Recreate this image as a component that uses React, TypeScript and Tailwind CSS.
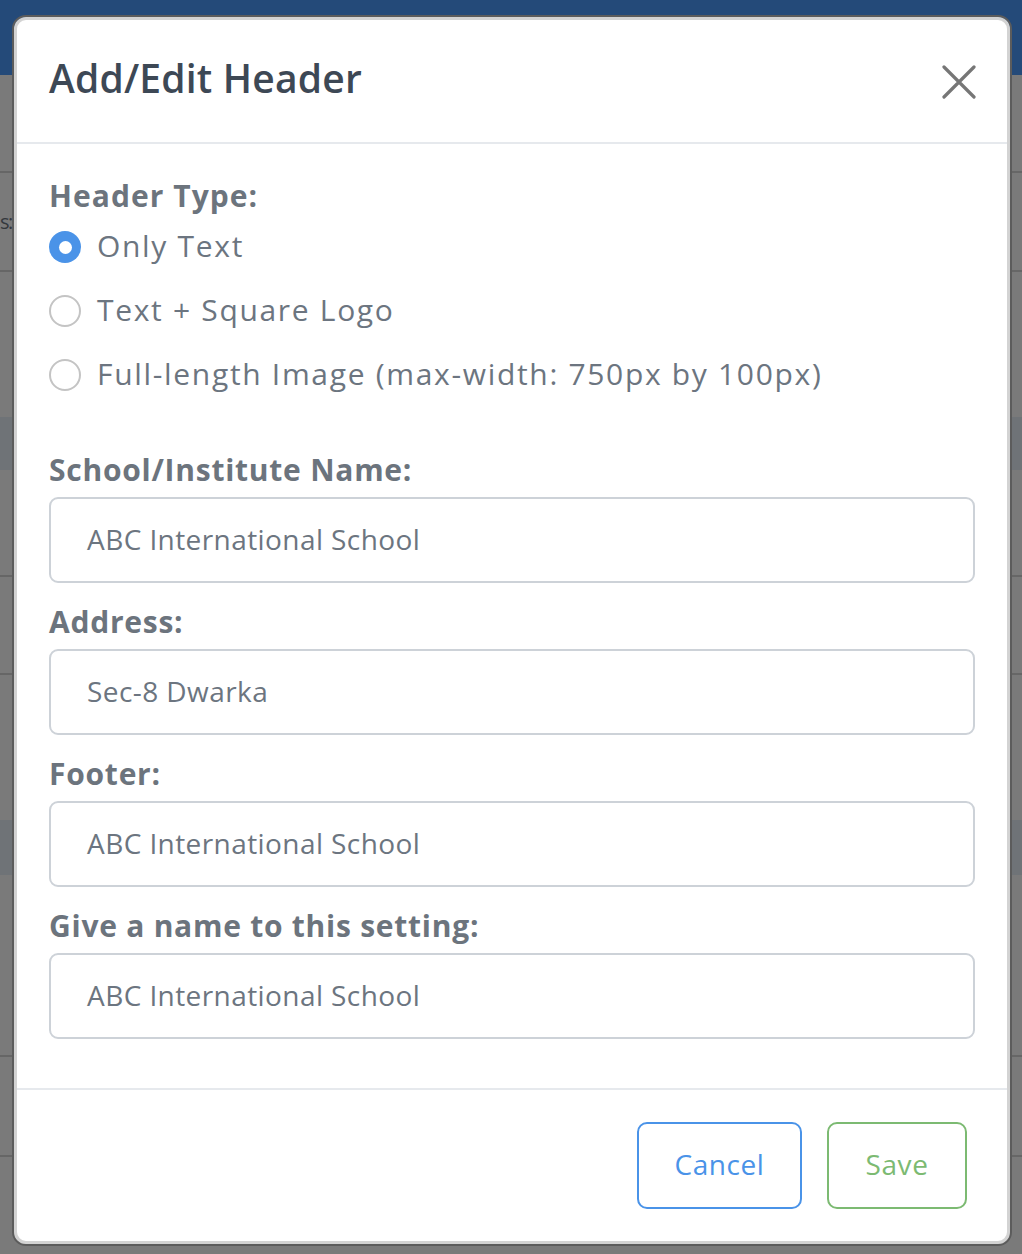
export default function App() {
  const fields = [
    { label: "School/Institute Name:", value: "ABC International School", first: true },
    { label: "Address:", value: "Sec-8 Dwarka", first: false },
    { label: "Footer:", value: "ABC International School", first: false },
    { label: "Give a name to this setting:", value: "ABC International School", first: false },
  ];
  const radios = [
    { label: "Only Text", checked: true },
    { label: "Text + Square Logo", checked: false },
    { label: "Full-length Image (max-width: 750px by 100px)", checked: false },
  ];
  return (
    <div className="relative h-[1254px] w-[1022px] overflow-hidden bg-[#7a7a7a] font-['Open_Sans',sans-serif]">
      {/* dimmed page behind the dialog */}
      <div className="h-[75px] bg-[#244a79]" />
      <div className="h-[98px] border-b-2 border-[#666666]" />
      <div className="flex h-[99px] items-center border-b-2 border-[#666666]">
        <span className="whitespace-nowrap text-[20px] leading-none tracking-[-0.08em] text-[#34383d]">s:</span>
      </div>
      <div className="h-[145px]" />
      <div className="h-[53px] bg-[#6f7377]" />
      <div className="h-[107px] border-b-2 border-[#666666]" />
      <div className="h-[98px] border-b-2 border-[#666666]" />
      <div className="h-[145px]" />
      <div className="h-[55px] bg-[#6f7377]" />
      <div className="h-[182px] border-b-2 border-[#666666]" />
      <div className="h-[100px] border-b-2 border-[#666666]" />

      {/* dialog */}
      <div className="absolute left-[12px] top-[15px] w-[1000px] rounded-[14px] border-2 border-[#5c5c5c]">
        <div className="overflow-hidden rounded-[12px] border-[3px] border-[#d3d3d3] bg-white">
          {/* header */}
          <div className="flex h-[124px] items-center justify-between border-b-2 border-[#e6e9ed] pl-[32px] pr-[31px]">
            <h2 className="-mt-[5px] text-[39px] font-semibold tracking-[0.005em] text-[#3d4855]">Add/Edit Header</h2>
            <svg width="34" height="34" viewBox="0 0 34 34" className="mt-[1px]">
              <path d="M2 2 L32 32 M32 2 L2 32" stroke="#767676" strokeWidth="3.2" strokeLinecap="round" />
            </svg>
          </div>

          {/* body */}
          <div className="px-[32px] pb-[49px] pt-[33px]">
            <div className="h-[38px] text-[30px] font-bold leading-[38px] tracking-[0.035em] text-[#6c747d]">Header Type:</div>
            {radios.map((r) => (
              <div key={r.label} className="flex h-[64px] items-center gap-[16px]">
                {r.checked ? (
                  <span className="flex h-[32px] w-[32px] shrink-0 items-center justify-center rounded-full bg-[#4a93e8]">
                    <span className="h-[13px] w-[13px] rounded-full bg-white" />
                  </span>
                ) : (
                  <span className="h-[32px] w-[32px] shrink-0 rounded-full border-2 border-[#c4c4c4] bg-white" />
                )}
                <span className="-mt-[3px] whitespace-nowrap text-[30px] tracking-[0.056em] text-[#6c7580]">{r.label}</span>
              </div>
            ))}
            {fields.map((f) => (
              <div key={f.label} className={f.first ? "mt-[43px]" : "mt-[19px]"}>
                <div className="mb-[7px] h-[40px] text-[30px] font-bold leading-[40px] tracking-[0.025em] text-[#6c747d]">{f.label}</div>
                <div className="flex h-[86px] items-center rounded-[9px] border-2 border-[#cdd2d8] bg-white px-[36px] pb-[3px]">
                  <span className="text-[28px] tracking-[0.015em] text-[#6c7580]">{f.value}</span>
                </div>
              </div>
            ))}
          </div>

          {/* footer */}
          <div className="flex justify-end gap-[25px] border-t-2 border-[#e6e9ed] pb-[32px] pl-[32px] pr-[40px] pt-[32px]">
            <button className="flex h-[87px] w-[165px] items-center justify-center rounded-[10px] border-2 border-[#4a93e8] bg-white pb-[3px] text-[28px] tracking-[0.02em] text-[#4a93e8]">
              Cancel
            </button>
            <button className="flex h-[87px] w-[140px] items-center justify-center rounded-[10px] border-2 border-[#7cba72] bg-white pb-[3px] text-[28px] tracking-[0.02em] text-[#7cba72]">
              Save
            </button>
          </div>
        </div>
      </div>
    </div>
  );
}
